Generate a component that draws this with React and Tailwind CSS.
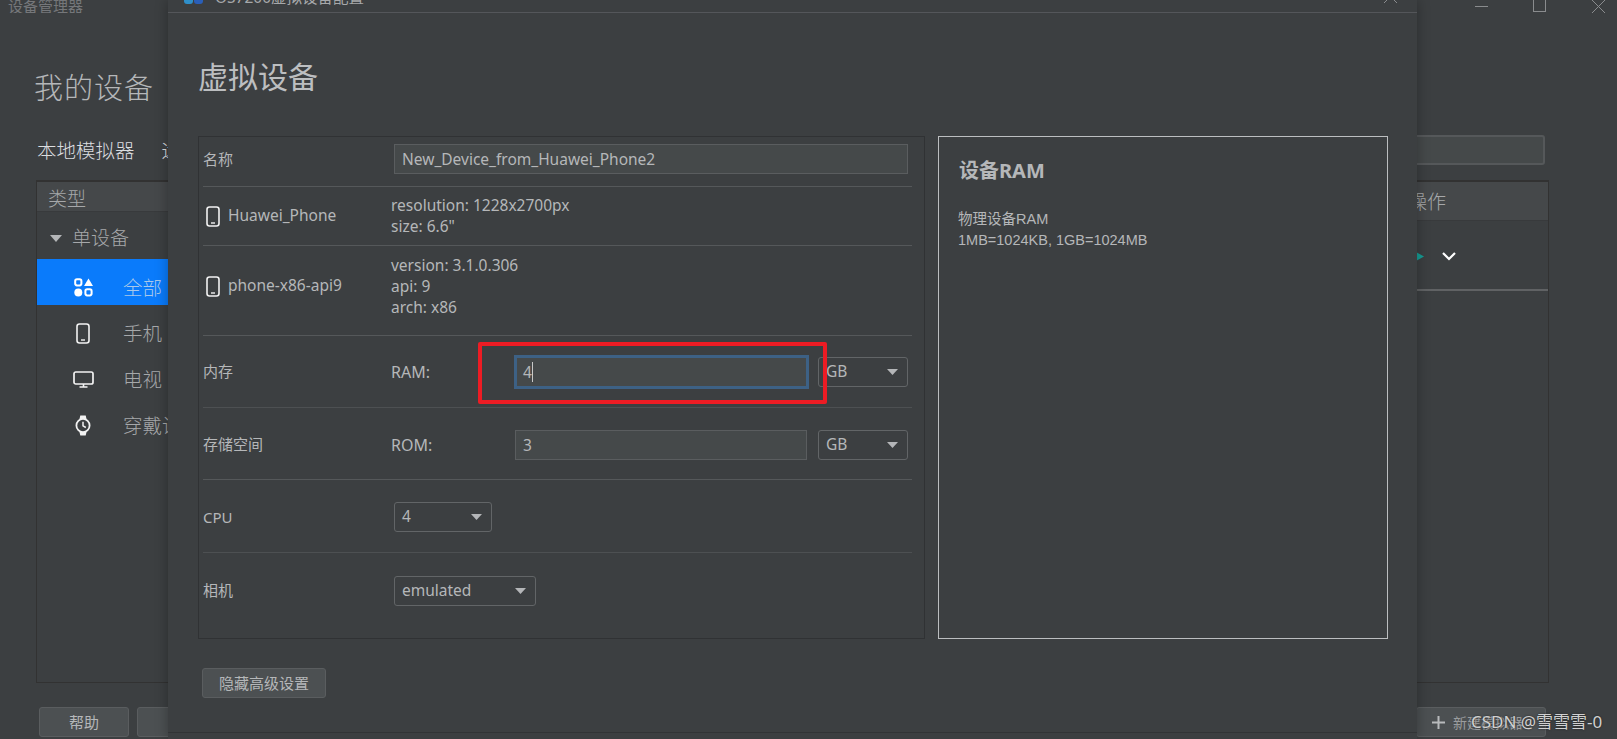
const cjk = '"Noto Sans", "Noto Sans CJK SC", sans-serif';

function Caret({ className = '', w = 11, h = 6 }) {
  return (
    <svg width={w} height={h} viewBox="0 0 13 7" preserveAspectRatio="none" className={className}>
      <path d="M0 0h13L6.5 7z" fill="#b4b6b8" />
    </svg>
  );
}

function PhoneIcon({ className = '' }) {
  return (
    <svg width="14" height="21" viewBox="0 0 14 21" fill="none" className={className}>
      <rect x="1" y="1" width="12" height="19" rx="2.5" stroke="#f2f2f2" strokeWidth="1.6" />
      <path d="M5 17h4" stroke="#f2f2f2" strokeWidth="1.4" />
    </svg>
  );
}

function AllIcon() {
  return (
    <svg width="19" height="19" viewBox="0 0 19 19" fill="none">
      <rect x="1.2" y="1.2" width="6.2" height="6.2" rx="1.8" stroke="#fff" strokeWidth="2" />
      <path d="M14.5 0.5l4.5 7.5h-9z" fill="#fff" />
      <circle cx="4.3" cy="14.5" r="4" fill="#fff" />
      <rect x="11.4" y="11.2" width="6.2" height="6.2" rx="1.8" stroke="#fff" strokeWidth="2" />
    </svg>
  );
}

function TvIcon() {
  return (
    <svg width="21" height="17" viewBox="0 0 21 17" fill="none">
      <rect x="1" y="1" width="19" height="12" rx="1.8" stroke="#f2f2f2" strokeWidth="1.7" />
      <path d="M10.5 13v3M6.5 16h8" stroke="#f2f2f2" strokeWidth="1.6" />
    </svg>
  );
}

function WatchIcon() {
  return (
    <svg width="16" height="21" viewBox="0 0 16 21" fill="none">
      <path d="M4.5 4l.8-3.5h5.4l.8 3.5M4.5 17l.8 3.5h5.4l.8-3.5" fill="#f2f2f2" />
      <circle cx="8" cy="10.5" r="6.6" fill="#3c3f41" stroke="#f2f2f2" strokeWidth="1.8" />
      <path d="M8 6.8v4l2.8 1.7" stroke="#f2f2f2" strokeWidth="1.5" />
    </svg>
  );
}

function SideRow({ icon, label, active }) {
  return (
    <div className={`h-[46px] pt-[11px] flex items-center overflow-hidden whitespace-nowrap ${active ? 'bg-[#0a7bfb]' : ''}`}>
      <div className="w-[22px] ml-[35px] mr-[29px] flex-none flex justify-center">{icon}</div>
      <span className={`text-[19.5px] font-light ${active ? 'text-[#a9c8ea]' : 'text-[#a6a8aa]'}`}>{label}</span>
    </div>
  );
}

function BackWindow() {
  return (
    <div className="h-full flex flex-col">
      <div className="h-[13px] flex-none overflow-hidden relative">
        <span className="absolute left-[8px] -top-[5px] text-[15px] leading-[22px] text-[#75777a]">设备管理器</span>
        <div className="absolute left-[1475px] top-[6px] w-[13px] h-px bg-[#8a8c8e]" />
        <div className="absolute left-[1533px] -top-[2px] w-[13px] h-[14px] border border-[#8a8c8e]" />
        <svg width="13" height="13" viewBox="0 0 13 13" className="absolute left-[1592px] top-0">
          <path d="M0 0l13 13M13 0L0 13" stroke="#8a8c8e" />
        </svg>
      </div>
      <div className="h-[109px] flex-none pl-[34px] pt-[41px]">
        <div className="text-[29px] leading-[68px] font-light text-[#b5b7b9] tracking-[1px]">我的设备</div>
      </div>
      <div className="h-[58px] flex-none flex items-center pl-[37px] pr-[72px] justify-between">
        <div className="flex gap-[27px] text-[19.5px] text-[#dcdee0] font-light">
          <span>本地模拟器</span>
          <span>远程模拟器</span>
        </div>
        <div className="w-[400px] h-[30px] -mt-[3px] rounded-[3px] border-2 border-[#55585a] bg-[#45494a]" />
      </div>
      <div className="h-[503px] flex-none ml-[36px] w-[1513px] border border-[#323232] border-t-2 flex justify-between">
        <div className="w-[131px] flex flex-col">
          <div className="h-[30px] flex-none bg-[#45484a] border-b border-[#383a3c] flex items-center pl-[11px] pt-[6px] text-[19px] font-light text-[#a6a8aa]">类型</div>
          <div className="h-[47px] flex items-center pt-[6px]">
            <Caret className="ml-[13px]" w={12} h={7} />
            <span className="ml-[10px] text-[19px] font-light text-[#a6a8aa]">单设备</span>
          </div>
          <SideRow icon={<AllIcon />} label="全部" active />
          <SideRow icon={<PhoneIcon />} label="手机" />
          <SideRow icon={<TvIcon />} label="电视" />
          <SideRow icon={<WatchIcon />} label="穿戴设备" />
        </div>
        <div className="w-[132px] flex flex-col">
          <div className="h-[39px] flex-none bg-[#45484a] border-b border-[#383a3c] flex items-center justify-end pr-[102px] pt-[3px] text-[19px] font-light text-[#a6a8aa] whitespace-nowrap">操作</div>
          <div className="h-[70px] flex-none border-b-2 border-[#606264] flex items-center gap-[18px] pt-[3px]">
            <svg width="8" height="9" viewBox="0 0 8 9">
              <path d="M0 0l8 4.5L0 9z" fill="#169c94" />
            </svg>
            <svg width="14" height="9" viewBox="0 0 14 9" fill="none">
              <path d="M1 1l6 6 6-6" stroke="#fff" strokeWidth="2.2" />
            </svg>
          </div>
        </div>
      </div>
      <div className="flex-1 pl-[39px] pr-[71px] pt-[24px] flex">
        <div className="w-[90px] h-[30px] rounded-[3px] border border-[#5a5d5f] bg-[#4c5052] text-[15px] text-[#b5b7b9] flex items-center justify-center">帮助</div>
        <div className="w-[90px] h-[30px] ml-[8px] rounded-[3px] border border-[#5a5d5f] bg-[#4c5052]" />
        <div className="ml-auto w-[130px] h-[30px] rounded-[3px] border border-[#5a5d5f] bg-[#4c5052] flex items-center pl-[15px] gap-[8px] text-[14px] text-[#9a9c9e] whitespace-nowrap">
          <svg width="13" height="13" viewBox="0 0 13 13">
            <path d="M6.5 0v13M0 6.5h13" stroke="#b8babc" strokeWidth="2" />
          </svg>
          新建模拟器
        </div>
      </div>
    </div>
  );
}

function FormRow({ h, line = 'border-[#55585a]', extra = '', children }) {
  return (
    <div className={`${h} ${line} ${extra} flex-none mx-[4px] mr-[12px] flex items-center text-[15px] text-[#b5b7b9] border-b`}>
      {children}
    </div>
  );
}

function Select({ w, value }) {
  return (
    <div className={`${w} h-[30px] flex-none rounded-[3px] border border-[#626567] flex items-center justify-between pl-[7px] pr-[9px] text-[15.5px] text-[#b5b7b9]`}>
      <span>{value}</span>
      <Caret />
    </div>
  );
}

function DialogForm() {
  return (
    <div className="w-[727px] flex-none border border-[#303234] flex flex-col">
      <FormRow h="h-[50px]" extra="pb-[5px]">
        <span className="w-[191px] flex-none">名称</span>
        <div className="w-[514px] h-[30px] flex-none border border-[#5a5d5f] bg-[#45494a] pl-[7px] text-[15.5px] leading-[28px]">New_Device_from_Huawei_Phone2</div>
      </FormRow>
      <FormRow h="h-[59px]">
        <div className="w-[188px] flex-none flex items-center gap-[8px] pl-[3px] text-[15.5px]">
          <PhoneIcon />
          <span>Huawei_Phone</span>
        </div>
        <div className="text-[15.5px] leading-[21px]">
          <div>resolution: 1228x2700px</div>
          <div>size: 6.6"</div>
        </div>
      </FormRow>
      <FormRow h="h-[90px]" extra="pb-[9px]">
        <div className="w-[188px] flex-none flex items-center gap-[8px] pl-[3px] text-[15.5px]">
          <PhoneIcon />
          <span>phone-x86-api9</span>
        </div>
        <div className="text-[15.5px] leading-[21px]">
          <div>version: 3.1.0.306</div>
          <div>api: 9</div>
          <div>arch: x86</div>
        </div>
      </FormRow>
      <FormRow h="h-[72px]" line="border-[#4d5052]">
        <span className="w-[188px] flex-none">内存</span>
        <span className="w-[123px] flex-none text-[16px]">RAM:</span>
        <div className="w-[295px] h-[34px] flex-none border-[3px] border-[#3d6185] bg-[#45494a] pl-[6px] text-[15.5px] leading-[28px] flex items-center">
          4<span className="w-px h-[20px] bg-[#c8c8c8]" />
        </div>
        <div className="ml-[9px]"><Select w="w-[90px]" value="GB" /></div>
      </FormRow>
      <FormRow h="h-[72px]" extra="pt-[2px]">
        <span className="w-[188px] flex-none">存储空间</span>
        <span className="w-[124px] flex-none text-[16px]">ROM:</span>
        <div className="w-[292px] h-[30px] flex-none border border-[#5a5d5f] bg-[#45494a] pl-[7px] text-[15.5px] leading-[28px]">3</div>
        <div className="ml-[11px]"><Select w="w-[90px]" value="GB" /></div>
      </FormRow>
      <FormRow h="h-[73px]" line="border-[#4d5052]" extra="pt-[2px]">
        <span className="w-[191px] flex-none">CPU</span>
        <Select w="w-[98px]" value="4" />
      </FormRow>
      <div className="flex-1 mx-[4px] flex items-center text-[15px] text-[#b5b7b9] pb-[10px]">
        <span className="w-[191px] flex-none">相机</span>
        <Select w="w-[142px]" value="emulated" />
      </div>
    </div>
  );
}

function Dialog() {
  return (
    <div className="absolute left-[168px] top-0 w-[1249px] h-[739px] bg-[#3c3f41] shadow-[0_0_12px_rgba(0,0,0,0.3)] flex flex-col">
      <div className="h-[13px] flex-none overflow-hidden relative border-b border-[#54565a]">
        <div className="absolute left-[16px] -top-[8px] w-[19px] h-[12px] flex gap-px">
          <div className="w-[9px] bg-[#2f8fc9] rounded-b-[3px]" />
          <div className="w-[9px] bg-[#2a5fb8] rounded-b-[3px]" />
        </div>
        <span className="absolute left-[47px] -top-[13px] text-[15.5px] leading-[20px] text-[#a6a8aa]">OS7200虚拟设备配置</span>
        <svg width="13" height="13" viewBox="0 0 13 13" className="absolute left-[1216px] -top-[10px]">
          <path d="M0 0l13 13M13 0L0 13" stroke="#8a8c8e" />
        </svg>
      </div>
      <div className="h-[123px] flex-none pl-[30px] pt-[36px] text-[30px] leading-[56px] text-[#bcbec0]">虚拟设备</div>
      <div className="h-[503px] flex-none pl-[30px] flex gap-[13px]">
        <DialogForm />
        <div className="w-[450px] flex-none border border-[#bcbec0] px-[20px] pt-[20px]">
          <div className="text-[20px] leading-[28px] font-bold text-[#b5b7b9]">设备RAM</div>
          <div className="mt-[24px] -ml-px text-[14.5px] leading-[21px] text-[#b5b7b9]" style={{ fontFamily: '"Liberation Sans", "Noto Sans CJK SC", sans-serif' }}>
            <div>物理设备RAM</div>
            <div>1MB=1024KB, 1GB=1024MB</div>
          </div>
        </div>
      </div>
      <div className="pl-[34px] pt-[29px] flex-1">
        <div className="w-[124px] h-[30px] rounded-[3px] border border-[#5a5d5f] bg-[#4c5052] text-[15px] text-[#b5b7b9] flex items-center justify-center">隐藏高级设置</div>
      </div>
      <div className="h-[7px] flex-none border-t border-[#323436]" />
    </div>
  );
}

export default function App() {
  return (
    <div className="relative w-[1617px] h-[739px] overflow-hidden bg-[#3c3f41]" style={{ fontFamily: cjk }}>
      <BackWindow />
      <Dialog />
      <div className="absolute left-[478px] top-[342px] w-[349px] h-[62px] border-4 border-[#ed1c24] rounded-[2px]" />
      <span className="absolute left-[1471px] top-[711px] text-[17px] leading-[22px] text-[#d0d0d0] whitespace-nowrap [text-shadow:0_0_2px_#222]">CSDN @雪雪雪-0</span>
    </div>
  );
}
